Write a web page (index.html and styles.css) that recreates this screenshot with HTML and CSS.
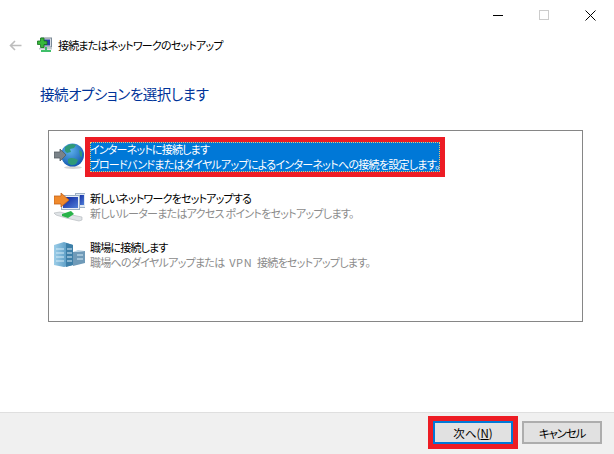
FILE: index.html
```html
<!DOCTYPE html>
<html lang="ja">
<head>
    <meta charset="UTF-8">
    <meta name="viewport" content="width=device-width, initial-scale=1.0">
    <title>接続またはネットワークのセットアップ</title>
    <link rel="stylesheet" href="styles.css">
</head>
<body>
    <div class="wizard">
        <div class="titlebar">
            <svg class="win-icon" width="11" height="11" viewBox="0 0 11 11"><path d="M0 5.5H10" stroke="#000" fill="none"/></svg>
            <svg class="win-icon" width="11" height="11" viewBox="0 0 11 11"><rect x="0.5" y="0.5" width="9" height="9" stroke="#ccc" fill="none"/></svg>
            <svg class="win-icon" width="11" height="11" viewBox="0 0 11 11"><path d="M0.5 0.5L10.5 10.5M10.5 0.5L0.5 10.5" stroke="#000" fill="none"/></svg>
        </div>

        <div class="nav">
            <svg class="back" width="13" height="11" viewBox="0 0 13 11"><path d="M12.5 5.500H1.500M6 1L1.500 5.500L6 10" stroke="#bdbdbd" stroke-width="1.6" fill="none"/></svg>
            <svg class="nav-icon" width="16" height="16" viewBox="0 0 16 16">
                <rect x="4.500" y="1" width="10" height="9" fill="#d8dde3" stroke="#7c8a96"/>
                <rect x="6.500" y="2.500" width="6.500" height="6" fill="#2c3fa8"/>
                <path d="M2 11h13v1.500H2z" fill="#c2c7cb"/>
                <path d="M8 10h2v3h4v2H4v-2h4z" fill="#3fbf6a"/>
                <path d="M3.500 1h3.500v3h3v3.500H7v3H3.500v-3H0.500V4h3z" fill="#37b83a" stroke="#176e1f" stroke-width="0.8"/>
            </svg>
            <span class="nav-title">接続またはネットワークのセットアップ</span>
        </div>

        <h1 class="heading">接続オプションを選択します</h1>

        <div class="option-list">
            <div class="option">
                <svg class="option-icon" width="31" height="32" viewBox="0 0 31 32">
                    <defs>
                        <radialGradient id="globe" cx="0.4" cy="0.3" r="0.8">
                            <stop offset="0" stop-color="#5fb4ee"/>
                            <stop offset="1" stop-color="#0b4fa8"/>
                        </radialGradient>
                    </defs>
                    <ellipse cx="19" cy="26.500" rx="9" ry="1.500" fill="#d5d5d5"/>
                    <circle cx="18.500" cy="14" r="11.500" fill="url(#globe)"/>
                    <path d="M11 6c4-3 8-4 11-2l-2 3-4 1 1 3-4 1-2-2zM14 18c3-2 7-1 10 1l-2 4c-3 2-6 1-8-1zM25 9l3 2v5l-2-1z" fill="#2f9a78"/>
                    <path d="M0 11h6V8l6 6-6 6v-3H0z" fill="#7a8288" stroke="#565d63" stroke-width="0.8"/>
                </svg>
                <div class="option-text selected">
                    <div class="option-name">インターネットに接続します</div>
                    <div class="option-desc">ブロードバンドまたはダイヤルアップによるインターネットへの接続を設定します。</div>
                </div>
            </div>

            <div class="option">
                <svg class="option-icon" width="31" height="32" viewBox="0 0 31 32">
                    <defs>
                        <linearGradient id="screen" x1="0" y1="0" x2="1" y2="1">
                            <stop offset="0" stop-color="#0a1f9a"/>
                            <stop offset="1" stop-color="#4f7fd8"/>
                        </linearGradient>
                    </defs>
                    <rect x="21.500" y="3.500" width="10" height="14" fill="#dfe8f2" stroke="#9db0c4"/>
                    <rect x="23" y="5" width="7" height="10" fill="url(#screen)"/>
                    <rect x="7.500" y="5.500" width="18" height="14" fill="#e9eff6" stroke="#9db0c4"/>
                    <rect x="9" y="7" width="15" height="11" fill="url(#screen)"/>
                    <path d="M0 6h7V3l8 7-8 7v-3H0z" fill="#f08a2c" stroke="#c2611a" stroke-width="0.8"/>
                    <path d="M0 23l6-1 12 3 10 2 0 3-3 1-13-3-10-3z" fill="#dfe3e6" stroke="#aeb4b8" stroke-width="0.6"/>
                    <path d="M8 24l9-3 3 3-6 4-6-2z" fill="#29b34a"/>
                </svg>
                <div class="option-text">
                    <div class="option-name">新しいネットワークをセットアップする</div>
                    <div class="option-desc muted">新しいルーターまたはアクセス ポイントをセットアップします。</div>
                </div>
            </div>

            <div class="option">
                <svg class="option-icon" width="31" height="32" viewBox="0 0 31 32">
                    <defs>
                        <linearGradient id="tower" x1="0" y1="0" x2="1" y2="0">
                            <stop offset="0" stop-color="#9ccde8"/>
                            <stop offset="1" stop-color="#3f88b6"/>
                        </linearGradient>
                    </defs>
                    <path d="M19 13l12-1v12l-12 3z" fill="#6f9ab8"/>
                    <path d="M19 13l5-2 7 1z" fill="#b6d2e4"/>
                    <path d="M0 6l10-3 9 3v20l-9 2-10-2z" fill="url(#tower)"/>
                    <path d="M12 4l7 2v20l-7 2z" fill="#3d7fa8"/>
                    <path d="M2 10h8M2 14h8M2 18h8M2 22h8M13 10h5M13 14h5M13 18h5M13 22h5M23 16h6M23 20h6" stroke="#d5ecf8" stroke-width="1"/>
                </svg>
                <div class="option-text">
                    <div class="option-name">職場に接続します</div>
                    <div class="option-desc muted">職場へのダイヤルアップまたは <span class="latin">VPN</span> 接続をセットアップします。</div>
                </div>
            </div>
        </div>

        <div class="footer">
            <div class="marker">
                <button class="btn btn-default">次へ(<u>N</u>)</button>
            </div>
            <button class="btn btn-cancel">キャンセル</button>
        </div>
    </div>
</body>
</html>
```

FILE: styles.css
```css
html, body {
    margin: 0;
    padding: 0;
    background-color: #fff;
}

.wizard {
    width: 614px;
    height: 454px;
    display: flex;
    flex-direction: column;
    font-family: "Noto Sans CJK JP", "Noto Sans", sans-serif;
    font-size: 11px;
    font-feature-settings: "palt";
    letter-spacing: -0.8px;
    color: #000;
    overflow: hidden;
}

.titlebar {
    height: 30px;
    display: flex;
    justify-content: flex-end;
    align-items: center;
    gap: 35px;
    padding-right: 18px;
}

.win-icon {
    display: block;
}

.nav {
    height: 30px;
    display: flex;
    align-items: center;
    padding-left: 9px;
}

.nav-icon {
    margin-left: 15px;
}

.nav-title {
    margin-left: 5px;
}

.heading {
    margin: 21px 0 0 40px;
    height: 26px;
    line-height: 26px;
    font-size: 14.5px;
    font-weight: normal;
    letter-spacing: -0.42px;
    color: #003399;
}

.option-list {
    margin: 23px 31px 0 48px;
    height: 192px;
    box-sizing: border-box;
    border: 1px solid #868686;
    padding: 6px 5px;
    display: flex;
    flex-direction: column;
    gap: 9px;
}

.option {
    display: flex;
    align-items: center;
    height: 40px;
}

.option-icon {
    flex: none;
}

.option-text {
    box-sizing: border-box;
    height: 40px;
    border: 5px solid transparent;
    line-height: 15px;
    white-space: nowrap;
}

.option-desc {
    letter-spacing: -0.72px;
}

.option-text.selected {
    border-color: #ed1c24;
    background-color: #0078d7;
    background-clip: padding-box;
    color: #fff;
    outline: 1px dotted #f5c26b;
    outline-offset: -6px;
}

.muted {
    color: #8c8c8c;
}

.latin {
    letter-spacing: 0.6px;
    margin: 0 3px;
}

.footer {
    margin-top: auto;
    height: 42px;
    box-sizing: border-box;
    border-top: 1px solid #dfdfdf;
    background-color: #f0f0f0;
    padding: 3px 12px 0 0;
    display: flex;
    justify-content: flex-end;
    align-items: flex-start;
    gap: 4px;
}

.marker {
    border: 5px solid #ed1c24;
    display: flex;
}

.btn {
    width: 80px;
    height: 23px;
    box-sizing: border-box;
    margin: 0;
    padding: 0;
    border: 2px solid #adadad;
    background-color: #e1e1e1;
    font-family: inherit;
    font-size: 11.5px;
    font-feature-settings: "palt";
    color: #000;
}

.footer > .btn {
    margin-top: 5px;
}

.btn-default {
    border-color: #0078d7;
}

.btn-cancel {
    letter-spacing: -1.2px;
}
```
